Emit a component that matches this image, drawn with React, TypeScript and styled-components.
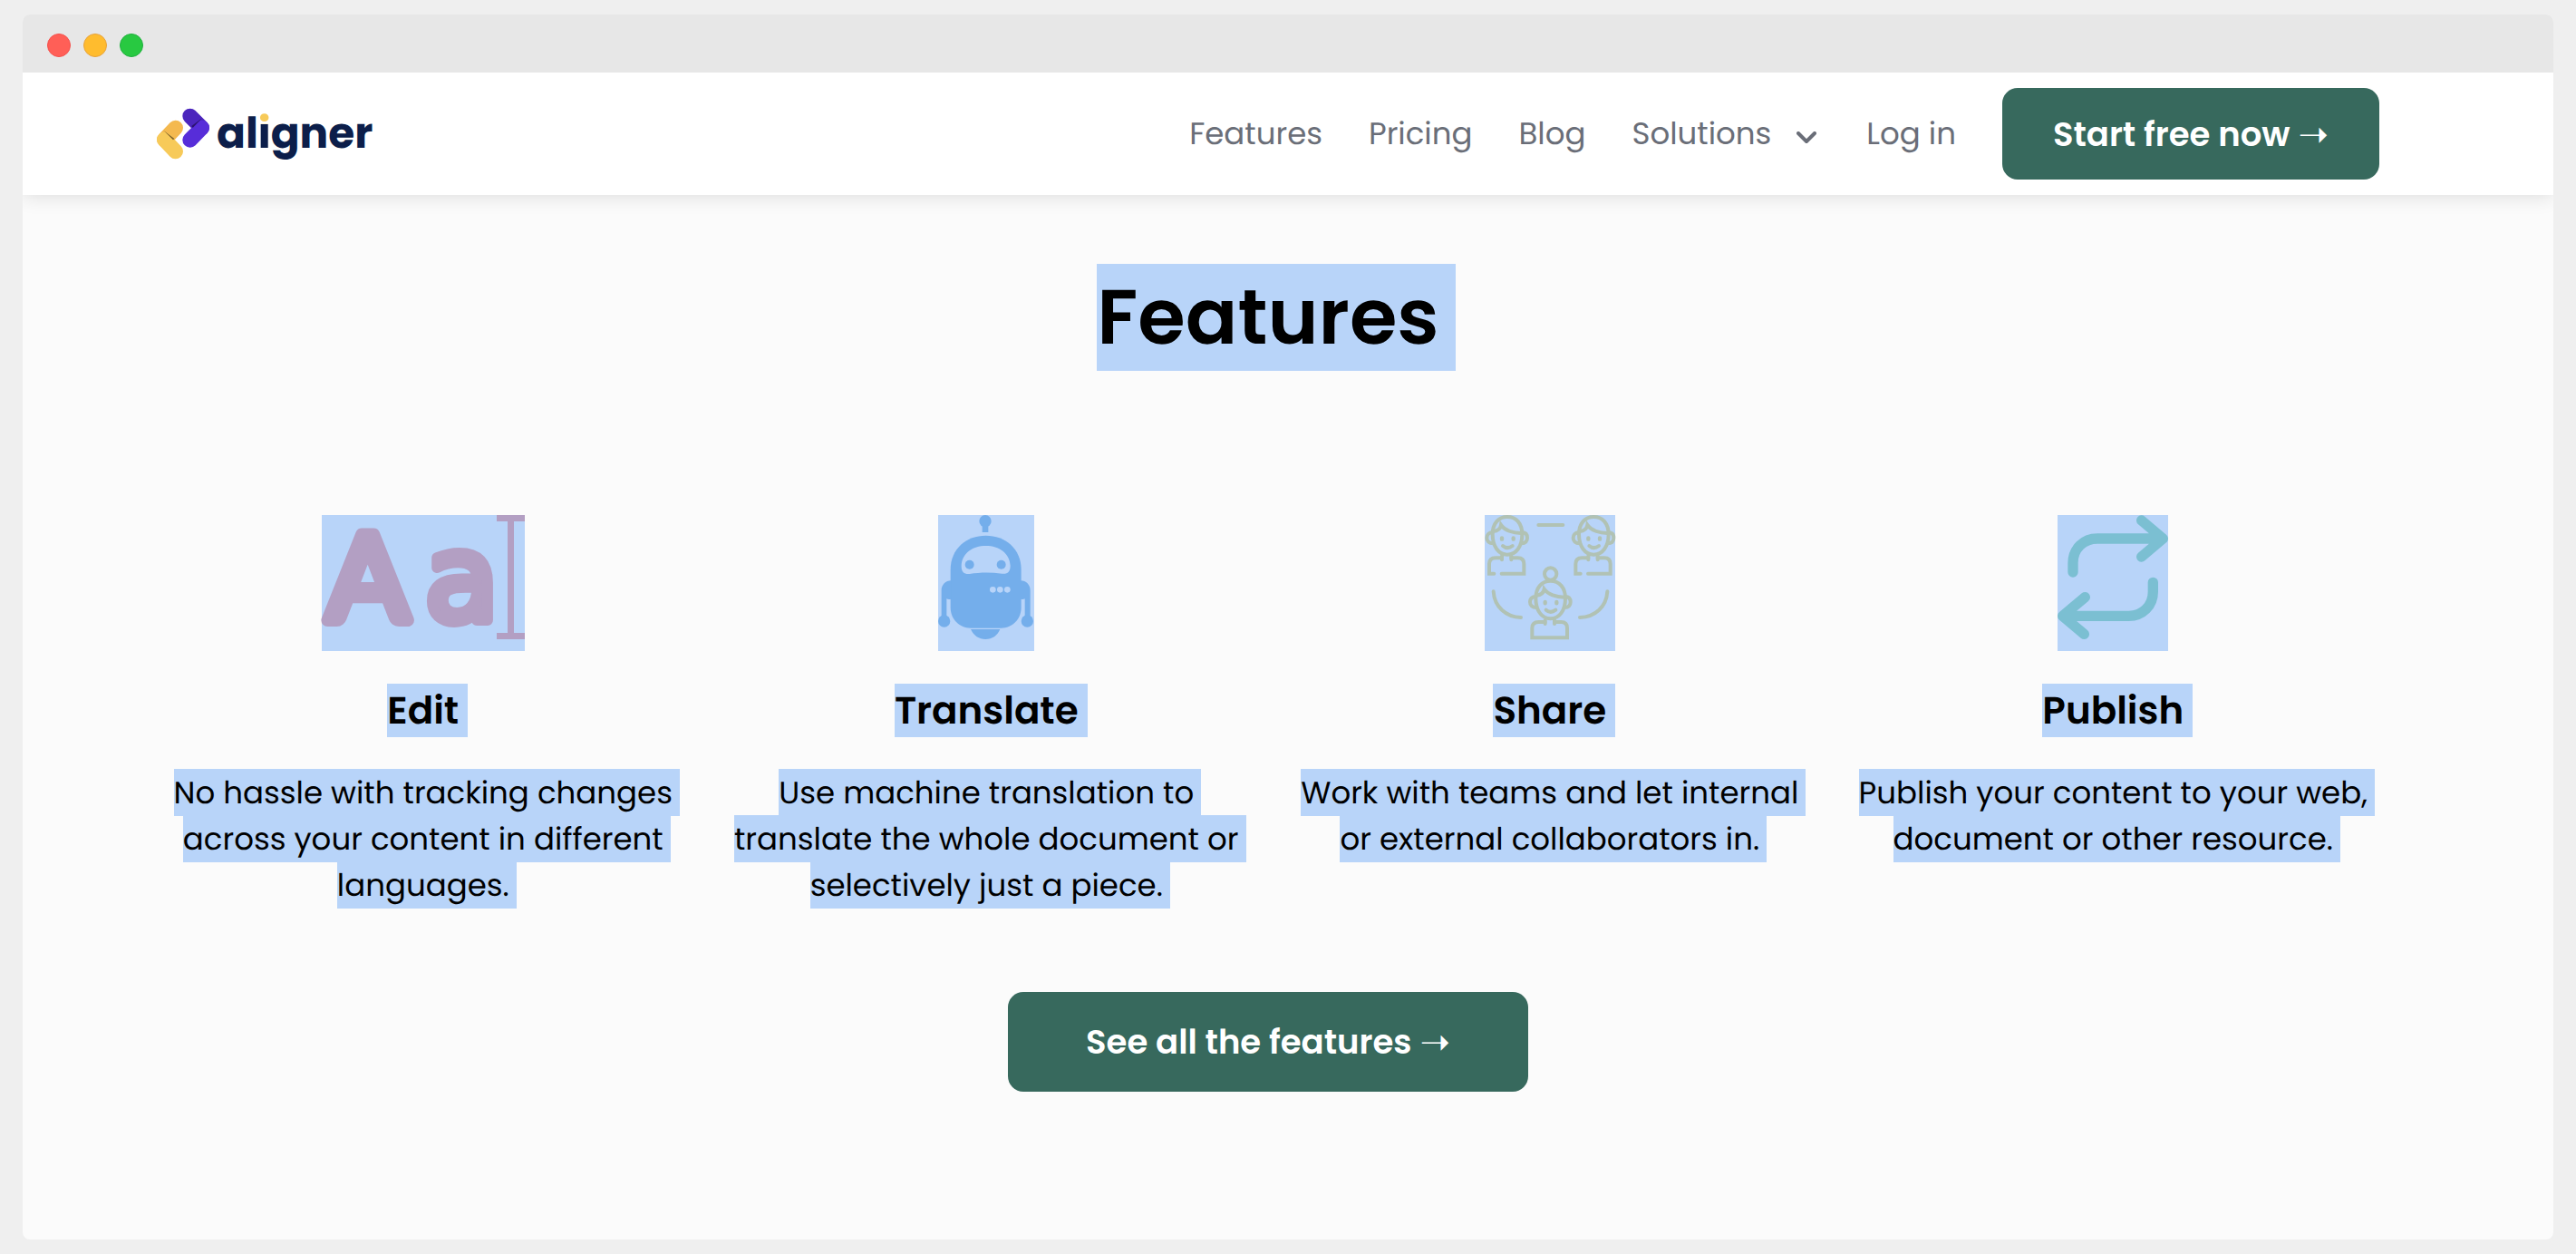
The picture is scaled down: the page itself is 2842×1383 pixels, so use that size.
import React from 'react';
import styled, { createGlobalStyle } from 'styled-components';

const SELECTION = '#b8d4f9';
const GREEN = '#37695d';

const GlobalStyle = createGlobalStyle`
  *, *::before, *::after { box-sizing: border-box; }
  body {
    margin: 0;
    background: #efefef;
    color: #000;
    font-family: Poppins, Inter, "Open Sans", sans-serif;
    text-rendering: geometricPrecision;
  }
  h1, h2, p { margin: 0; }
`;

const Page = styled.div`
  min-height: 100vh;
  padding: 16px 25px;
  display: flex;
`;

const BrowserWindow = styled.div`
  flex: 1;
  display: flex;
  flex-direction: column;
  border-radius: 8px;
  overflow: hidden;
  background: #fbfbfb;
`;

const TitleBar = styled.div`
  display: flex;
  align-items: center;
  gap: 14px;
  height: 64px;
  padding: 4px 27px 0;
  background: #e7e7e7;
`;

const Light = styled.span<{ $fill: string; $edge: string }>`
  width: 26px;
  height: 26px;
  border-radius: 50%;
  background: ${(p) => p.$fill};
  border: 1px solid ${(p) => p.$edge};
`;

const Header = styled.header`
  display: flex;
  align-items: center;
  justify-content: space-between;
  height: 135px;
  padding: 0 192px 0 148px;
  background: #fff;
  box-shadow: 0 2px 20px rgba(0, 0, 0, 0.12);
  clip-path: inset(0 0 -30px 0);
`;

const Brand = styled.a`
  display: flex;
  align-items: center;
  gap: 8px;
  color: #0c1e4a;
  text-decoration: none;
`;

const Wordmark = styled.span`
  font-size: 47px;
  line-height: 54px;
  font-weight: 700;
`;

const DottedI = styled.span`
  color: transparent;
  background: linear-gradient(#f7ca59 0 22px, #0c1e4a 22px);
  background-clip: text;
  -webkit-background-clip: text;
`;

const Nav = styled.nav`
  display: flex;
  align-items: center;
  gap: 51px;
`;

const navItem = `
  display: flex;
  align-items: baseline;
  gap: 28px;
  padding: 0;
  border: 0;
  background: none;
  color: #6a6e78;
  font: inherit;
  font-size: 34px;
  line-height: 51px;
  text-decoration: none;
`;

const NavLink = styled.a`${navItem}`;
const NavMenuButton = styled.button`${navItem}`;

const Button = styled.button<{ $large?: boolean }>`
  display: flex;
  align-items: center;
  gap: 9px;
  height: ${(p) => (p.$large ? 110 : 101)}px;
  padding: 0 ${(p) => (p.$large ? 86 : 56)}px;
  border: 0;
  border-radius: 17px;
  background: ${GREEN};
  color: #fff;
  font: inherit;
  font-size: 37px;
  line-height: 54px;
  font-weight: 600;
  white-space: nowrap;
`;

const Arrow = styled.span`
  font-family: "DejaVu Sans", sans-serif;
  font-size: 40px;
`;

const Main = styled.main`
  flex: 1;
  display: flex;
  flex-direction: column;
  align-items: center;
  padding: 76px 175px 76px 131px;
`;

const Selected = styled.span`
  display: inline-block;
  background: ${SELECTION};
`;

const Heading = styled.h1`
  font-size: 85px;
  line-height: 118px;
  font-weight: 600;

  ${Selected} {
    padding-right: 18px;
    margin-right: -18px;
  }
`;

const FeatureGrid = styled.section`
  display: grid;
  grid-template-columns: repeat(4, 1fr);
  width: 100%;
  margin-top: 159px;
`;

const Feature = styled.article`
  display: flex;
  flex-direction: column;
  align-items: center;
  gap: 36px;
  padding: 0 18px;
  text-align: center;
`;

const FeatureIcon = styled.svg`
  display: block;
  height: 150px;
  overflow: visible;
  background: ${SELECTION};
`;

const FeatureTitle = styled.h2`
  font-size: 42px;
  line-height: 59px;
  font-weight: 600;

  ${Selected} {
    padding-right: 10px;
    margin-right: -10px;
  }
`;

const FeatureText = styled.p`
  padding-left: 8px;
  font-size: 34px;
  line-height: 51px;
`;

const SelectedLines = styled.span`
  padding: 2px 8px 2px 0;
  background: ${SELECTION};
  box-decoration-break: clone;
  -webkit-box-decoration-break: clone;
`;

const Action = styled.div`
  margin-top: 92px;
`;

const LogoMark = () => (
  <svg width="58" height="57" viewBox="519 357 174 171" fill="none" strokeWidth="50" strokeLinecap="round" aria-hidden="true">
    <path d="M581 423 544 462" stroke="#f4b94f" />
    <path d="M544 462 581 501" stroke="#f7ca59" />
    <path d="M541 431 577 459 573 463Z" fill="#7d6029" />
    <path d="M629 384 668 423" stroke="#4c26bd" />
    <path d="M668 423 629 463" stroke="#572dd9" />
    <path d="M669 391 634 417 638 423Z" fill="#2c146f" />
  </svg>
);

const Chevron = () => (
  <svg width="26" height="14" viewBox="0 0 26 14" fill="none" stroke="#6a6e78" strokeWidth="4" strokeLinecap="round" strokeLinejoin="round" aria-hidden="true">
    <path d="M2 2 11 11 20 2" />
  </svg>
);

const EditIcon = () => (
  <FeatureIcon width="224" viewBox="0 0 224 150" aria-hidden="true">
    <g fill="#b39fc3" stroke="#b39fc3" strokeLinejoin="round">
      <text x="6" y="116" fontFamily="Lato, sans-serif" fontSize="132" strokeWidth="14">A</text>
      <text x="114" y="116" fontFamily="'DejaVu Sans', sans-serif" fontSize="132" strokeWidth="12">a</text>
    </g>
    <path d="M193 0H224V7H212V130H224V137H193V130H205V7H193Z" fill="#b39fc3" />
  </FeatureIcon>
);

const RobotIcon = () => (
  <FeatureIcon width="106" viewBox="76 54 318 450" fill="#74aeeb" aria-hidden="true">
    <circle cx="232" cy="74" r="20" />
    <path d="M222 88H242V111H222Z" />
    <path d="M117 235C117 165 170 122 234 122S351 165 351 235V360C351 400 320 428 285 428H183C148 428 117 400 117 360Z" />
    <path d="M119 271C101 271 87 285 87 303V390H104V331Q110 334 119 332ZM349 271C367 271 381 285 381 303V390H363V331Q357 334 349 332Z" />
    <circle cx="96" cy="405" r="20" />
    <circle cx="371" cy="405" r="20" />
    <path d="M184 432H281C272 453 255 465 233 465S194 453 184 432Z" />
    <path fill={SELECTION} d="M153 222C155 180 190 156 234 156S313 180 315 222C315 244 304 250 288 248C250 243 216 243 180 249C162 250 153 244 153 222Z" />
    <circle cx="180" cy="218" r="15" />
    <circle cx="285" cy="218" r="15" />
    <g fill={SELECTION}>
      <circle cx="257" cy="301" r="10" />
      <circle cx="281" cy="301" r="10" />
      <circle cx="305" cy="301" r="10" />
    </g>
  </FeatureIcon>
);

const Person = ({ x, y, bun }: { x: number; y: number; bun?: boolean }) => (
  <g transform={`translate(${x} ${y})`}>
    <path d="M78 118C78 82 98 60 127 60S176 82 176 118C176 158 156 185 127 185S78 158 78 118Z" />
    <path d="M78 112C65 112 59 120 59 130S66 148 80 148M176 112C188 112 193 120 193 130S187 148 174 148" />
    <path d="M80 108C95 107 104 100 106 87C118 104 145 115 176 114" />
    <path d="M109 130V134M147 130V134" strokeWidth="13" />
    <path d="M112 156Q127 169 144 156" />
    <path d="M109 190V202M140 190V202" />
    {bun ? (
      <>
        <circle cx="127" cy="37" r="20" />
        <path d="M109 196H88Q66 196 66 216V248H182V216Q182 196 162 196H140" />
      </>
    ) : (
      <path d="M83 248H67V216Q67 196 88 196H109M140 196H162Q182 196 182 216V248H108" />
    )}
  </g>
);

const ShareIcon = () => (
  <FeatureIcon width="144" viewBox="52 54 432 450" fill="none" stroke="#b1c2b4" strokeWidth="12" strokeLinecap="round" aria-hidden="true">
    <Person x={0} y={0} />
    <Person x={286} y={0} />
    <Person x={143} y={212} bun />
    <path d="M230 87H311M81 307C84 357 122 391 172 393M458 307C455 357 418 391 367 393" />
  </FeatureIcon>
);

const PublishIcon = () => (
  <FeatureIcon width="122" viewBox="60 54 366 450" fill="none" stroke="#7bbfd2" strokeWidth="34" strokeLinecap="round" strokeLinejoin="round" aria-hidden="true">
    <path d="M111 243V212C111 166 146 132 192 132H405M338 72 409 132 338 192" />
    <path d="M376 277V308C376 354 341 388 296 388H80M151 326 77 388 148 448" />
  </FeatureIcon>
);

const features = [
  { title: 'Edit', icon: <EditIcon />, text: 'No hassle with tracking changes across your content in different languages.' },
  { title: 'Translate', icon: <RobotIcon />, text: 'Use machine translation to translate the whole document or selectively just a piece.' },
  { title: 'Share', icon: <ShareIcon />, text: 'Work with teams and let internal or external collaborators in.' },
  { title: 'Publish', icon: <PublishIcon />, text: 'Publish your content to your web, document or other resource.' },
];

export default function App() {
  return (
    <>
      <GlobalStyle />
      <Page>
        <BrowserWindow>
          <TitleBar>
            <Light $fill="#ff5f57" $edge="#f5504c" />
            <Light $fill="#ffbc2e" $edge="#e8a33a" />
            <Light $fill="#28c941" $edge="#1fb03e" />
          </TitleBar>
          <Header>
            <Brand href="#home">
              <LogoMark />
              <Wordmark>al<DottedI>i</DottedI>gner</Wordmark>
            </Brand>
            <Nav>
              <NavLink href="#features">Features</NavLink>
              <NavLink href="#pricing">Pricing</NavLink>
              <NavLink href="#blog">Blog</NavLink>
              <NavMenuButton type="button">Solutions <Chevron /></NavMenuButton>
              <NavLink href="#login">Log in</NavLink>
              <Button type="button">Start free now <Arrow>➝</Arrow></Button>
            </Nav>
          </Header>
          <Main>
            <Heading><Selected>Features</Selected></Heading>
            <FeatureGrid>
              {features.map((f) => (
                <Feature key={f.title}>
                  {f.icon}
                  <FeatureTitle><Selected>{f.title}</Selected></FeatureTitle>
                  <FeatureText><SelectedLines>{f.text}</SelectedLines></FeatureText>
                </Feature>
              ))}
            </FeatureGrid>
            <Action>
              <Button type="button" $large>See all the features <Arrow>➝</Arrow></Button>
            </Action>
          </Main>
        </BrowserWindow>
      </Page>
    </>
  );
}
